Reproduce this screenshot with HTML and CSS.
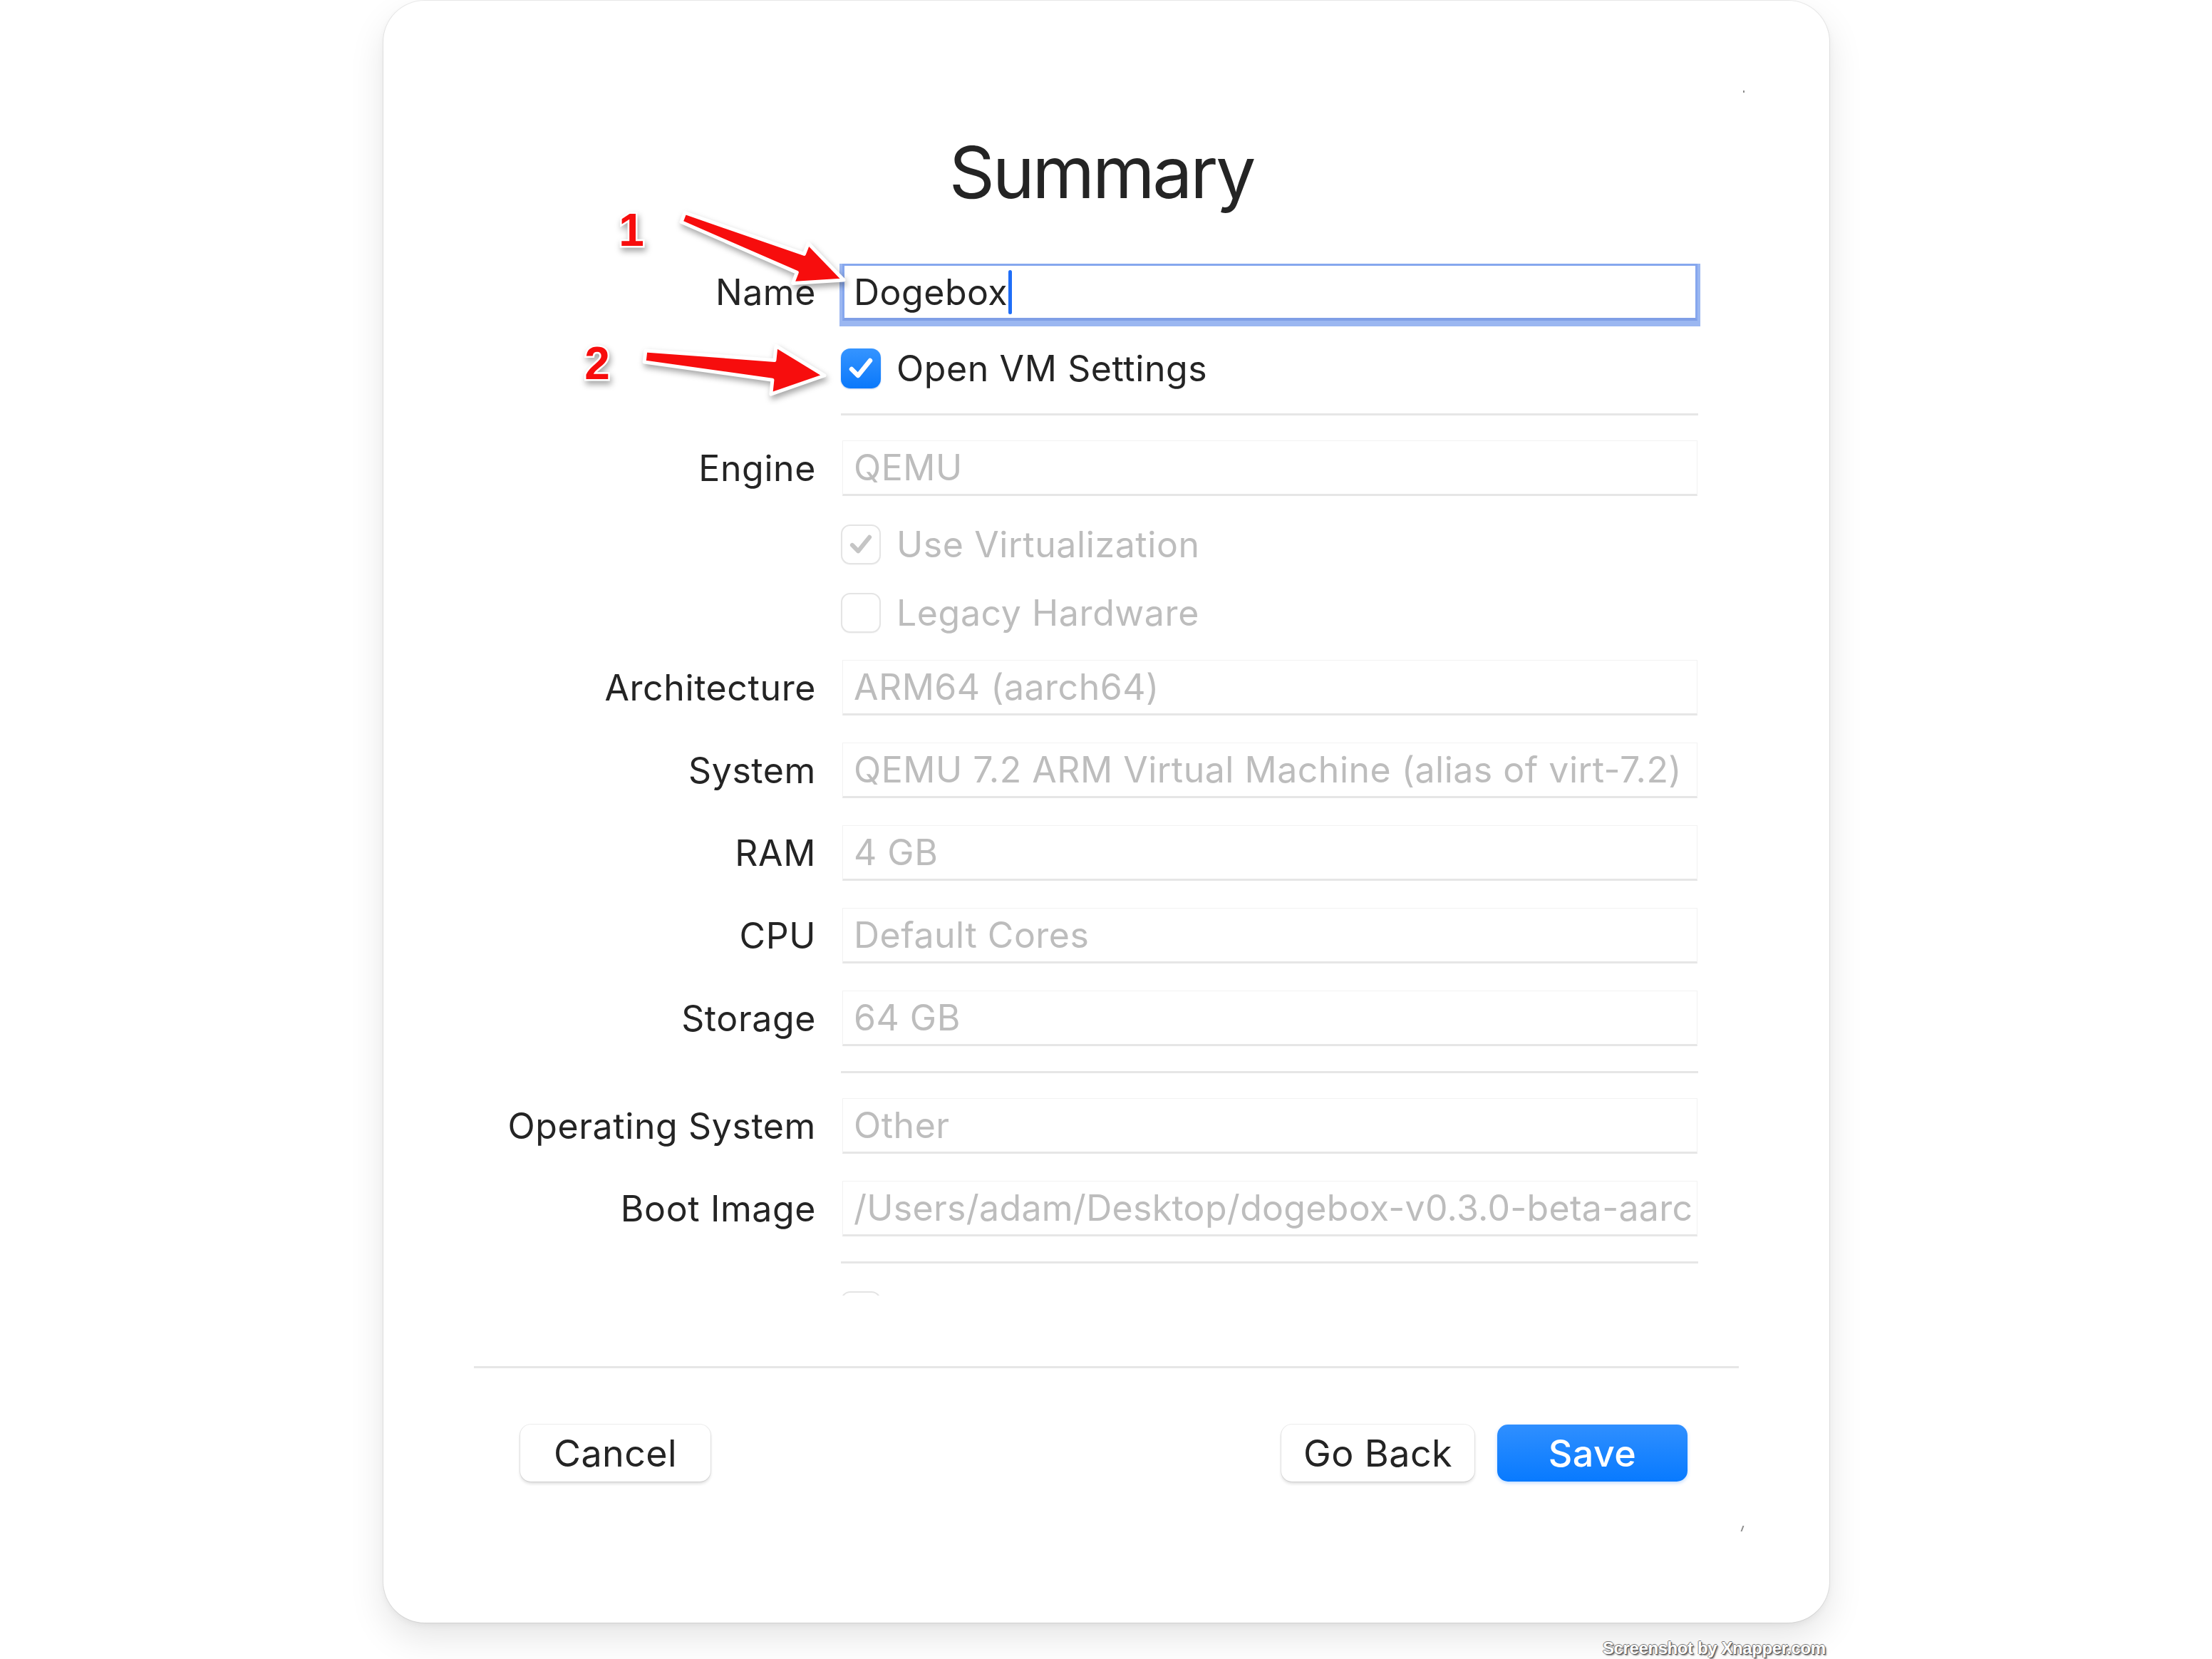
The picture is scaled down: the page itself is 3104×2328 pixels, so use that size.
FILE: index.html
```html
<!DOCTYPE html>
<html lang="en">
<head>
<meta charset="utf-8">
<title>Summary</title>
<link rel="stylesheet" href="styles.css">
</head>
<body>
<div class="window">
  <span class="mark mark-top"></span>
  <h1 class="title">Summary</h1>
  <div class="scroll">
    <div class="row row-name">
      <div class="label">Name</div>
      <div class="field field-focus"><span class="value-dark">Dogebox</span><span class="caret"></span></div>
    </div>
    <div class="row row-check row-first-check">
      <div class="label"></div>
      <div class="check-wrap">
        <span class="box box-on"><svg viewBox="0 0 56 56" class="tick"><path d="M15 29 L24 38 L41 17" /></svg></span>
        <span class="check-text">Open VM Settings</span>
      </div>
    </div>
    <div class="row row-sep"><div class="label"></div><div class="sep"></div></div>
    <div class="row row-field row-after-sep">
      <div class="label">Engine</div>
      <div class="field"><span class="value">QEMU</span></div>
    </div>
    <div class="row row-check">
      <div class="label"></div>
      <div class="check-wrap">
        <span class="box box-dis"><svg viewBox="0 0 56 56" class="tick tick-dis"><path d="M15 29 L24 38 L41 17" /></svg></span>
        <span class="check-text check-text-dis">Use Virtualization</span>
      </div>
    </div>
    <div class="row row-check">
      <div class="label"></div>
      <div class="check-wrap">
        <span class="box box-dis"></span>
        <span class="check-text check-text-dis">Legacy Hardware</span>
      </div>
    </div>
    <div class="row row-field">
      <div class="label">Architecture</div>
      <div class="field"><span class="value">ARM64 (aarch64)</span></div>
    </div>
    <div class="row row-field">
      <div class="label">System</div>
      <div class="field"><span class="value">QEMU 7.2 ARM Virtual Machine (alias of virt-7.2)</span></div>
    </div>
    <div class="row row-field">
      <div class="label">RAM</div>
      <div class="field"><span class="value">4 GB</span></div>
    </div>
    <div class="row row-field">
      <div class="label">CPU</div>
      <div class="field"><span class="value">Default Cores</span></div>
    </div>
    <div class="row row-field">
      <div class="label">Storage</div>
      <div class="field"><span class="value">64 GB</span></div>
    </div>
    <div class="row row-sep"><div class="label"></div><div class="sep"></div></div>
    <div class="row row-field row-after-sep">
      <div class="label">Operating System</div>
      <div class="field"><span class="value">Other</span></div>
    </div>
    <div class="row row-field">
      <div class="label">Boot Image</div>
      <div class="field"><span class="value value-path">/Users/adam/Desktop/dogebox-v0.3.0-beta-aarc</span></div>
    </div>
    <div class="row row-sep"><div class="label"></div><div class="sep"></div></div>
    <div class="row row-check row-clipped">
      <div class="label"></div>
      <div class="check-wrap">
        <span class="box box-dis"></span>
      </div>
    </div>
  </div>
  <div class="divider"></div>
  <div class="buttons">
    <button class="btn btn-cancel">Cancel</button>
    <div class="spacer"></div>
    <button class="btn btn-back">Go Back</button>
    <button class="btn btn-save">Save</button>
  </div>
  <span class="mark mark-bottom"></span>
</div>

<svg class="annotations" width="1300" height="700" viewBox="0 0 1300 700">
  <polygon class="arrow" points="961,298.5 1128.5,356.4 1134.3,341.4 1184,393 1112.5,397.4 1118.3,382.4 956,311.5" />
  <polygon class="arrow" points="905.9,492 1086.9,505.4 1089,485.5 1157,527 1081.8,553.1 1083.9,533.2 904.1,508" />
  <text class="num" x="886" y="345">1</text>
  <text class="num" x="838" y="532">2</text>
</svg>

<div class="watermark">Screenshot by Xnapper.com</div>
</body>
</html>
```

FILE: styles.css
```css
html, body {
  margin: 0;
  padding: 0;
  background: #ffffff;
}

body {
  width: 3104px;
  height: 2328px;
  position: relative;
  overflow: hidden;
  font-family: Inter, "Noto Sans", "Liberation Sans", sans-serif;
  color: #242424;
}

.window {
  position: relative;
  margin-left: 538px;
  margin-top: 1px;
  width: 2029px;
  height: 2276px;
  background: #ffffff;
  border-radius: 58px;
  box-shadow: 0 0 0 1px rgba(0, 0, 0, 0.07), 0 22px 50px rgba(0, 0, 0, 0.10), 0 4px 10px rgba(0, 0, 0, 0.05);
  display: flex;
  flex-direction: column;
}

.title {
  margin: 0;
  padding-top: 191px;
  padding-right: 14px;
  font-size: 100px;
  line-height: 100px;
  font-weight: 400;
  text-align: center;
  color: #242424;
  letter-spacing: -3.2px;
}

.scroll {
  margin-top: 78px;
  height: 1448px;
  overflow: hidden;
  display: flex;
  flex-direction: column;
}

.row {
  display: flex;
  align-items: center;
  flex-shrink: 0;
}

.label {
  flex-shrink: 0;
  text-align: right;
  font-size: 50px;
  letter-spacing: 0.6px;
  color: #242424;
  padding-right: 37px;
  box-sizing: border-box;
  width: 644px;
  white-space: nowrap;
}

.field {
  width: 1200px;
  height: 78px;
  box-sizing: border-box;
  border: 1px solid #f2f2f2;
  border-bottom: 3px solid #e6e6e6;
  display: flex;
  align-items: center;
  padding-left: 15px;
  font-size: 50px;
  letter-spacing: 0.5px;
  overflow: hidden;
  white-space: nowrap;
}

.row-name .field {
  height: 80px;
}

.field-focus {
  border: 3px solid #86a7ee;
  border-bottom: 4px solid #7f9fe6;
  box-shadow: 0 0 0 4px #9bb7f1, 0 4px 0 4px #9bb7f1;
  padding-left: 13px;
}

.value {
  color: #bdbdbd;
}

.value-path {
  letter-spacing: 0.3px;
}

.value-dark {
  color: #242424;
}

.caret {
  display: inline-block;
  width: 5px;
  height: 62px;
  border-radius: 3px;
  background: #1f6ef7;
  margin-left: 1px;
}

.row-field {
  margin-top: 38px;
}

.row-after-sep {
  margin-top: 35px;
}

.row-check {
  margin-top: 40px;
  height: 56px;
}

.row-first-check {
  margin-top: 39px;
}

.row-sep {
  margin-top: 35px;
}

.row-clipped {
  margin-top: 39px;
}

.sep {
  width: 1203px;
  height: 3px;
  background: #e6e6e6;
  margin-left: -2px;
}

.check-wrap {
  display: flex;
  align-items: center;
  gap: 22px;
  margin-left: -2px;
}

.box {
  width: 56px;
  height: 56px;
  border-radius: 13px;
  box-sizing: border-box;
  display: flex;
  align-items: center;
  justify-content: center;
  flex-shrink: 0;
}

.box-on {
  background: linear-gradient(#3594ff, #0a78fb);
  box-shadow: 0 1px 2px rgba(0, 80, 200, 0.3);
}

.box-dis {
  background: #ffffff;
  border: 2px solid #e4e4e4;
  box-shadow: 0 1px 1px rgba(0, 0, 0, 0.04);
}

.tick {
  width: 56px;
  height: 56px;
  flex-shrink: 0;
}

.tick path {
  fill: none;
  stroke: #ffffff;
  stroke-width: 6.5;
  stroke-linecap: round;
  stroke-linejoin: round;
}

.box-dis .tick {
  width: 52px;
  height: 52px;
}

.tick-dis path {
  stroke: #c5c5c5;
}

.check-text {
  font-size: 50px;
  letter-spacing: 0.6px;
  color: #242424;
}

.check-text-dis {
  color: #bdbdbd;
}

.divider {
  margin: 99px 127px 0 127px;
  height: 3px;
  background: #e6e6e6;
  flex-shrink: 0;
}

.buttons {
  margin-top: 79px;
  display: flex;
  align-items: center;
  padding-left: 192px;
  padding-right: 199px;
}

.spacer {
  flex: 1;
}

.btn {
  height: 80px;
  border: none;
  border-radius: 15px;
  font-family: Inter, "Noto Sans", "Liberation Sans", sans-serif;
  font-size: 52px;
  letter-spacing: 0.4px;
  color: #242424;
  background: #ffffff;
  box-shadow: 0 0 0 1px rgba(0, 0, 0, 0.07), 0 3px 4px rgba(0, 0, 0, 0.14);
  padding: 0;
}

.btn-cancel {
  width: 267px;
}

.btn-back {
  width: 271px;
}

.btn-save {
  width: 267px;
  margin-left: 32px;
  color: #ffffff;
  font-weight: 500;
  background: linear-gradient(#2f8fff, #087aff);
  box-shadow: 0 2px 5px rgba(0, 110, 255, 0.25);
}

.mark {
  position: absolute;
  background: #8c8c8c;
  width: 2px;
}

.mark-top {
  left: 1908px;
  top: 126px;
  height: 3px;
}

.mark-bottom {
  left: 1906px;
  top: 2140px;
  height: 8px;
  transform: skewX(-20deg);
}

.annotations {
  position: absolute;
  left: 0;
  top: 0;
  filter: drop-shadow(2px 5px 4px rgba(0, 0, 0, 0.35));
}

.arrow {
  fill: #f70d0d;
  stroke: #ffffff;
  stroke-width: 5;
  stroke-linejoin: round;
}

.num {
  font-family: "Liberation Sans", Arial, sans-serif;
  font-weight: 700;
  font-size: 64px;
  fill: #f70d0d;
  stroke: #ffffff;
  stroke-width: 5;
  paint-order: stroke;
  text-anchor: middle;
}

.watermark {
  position: absolute;
  left: 2249px;
  top: 2299px;
  font-family: "Liberation Sans", Arial, sans-serif;
  font-weight: 700;
  font-size: 24px;
  letter-spacing: -0.4px;
  color: #ffffff;
  text-shadow: 1px 1px 0 #555, -1px 0 0 #777, 0 -1px 0 #777, 2px 2px 2px rgba(0, 0, 0, 0.5);
  white-space: nowrap;
}
```
